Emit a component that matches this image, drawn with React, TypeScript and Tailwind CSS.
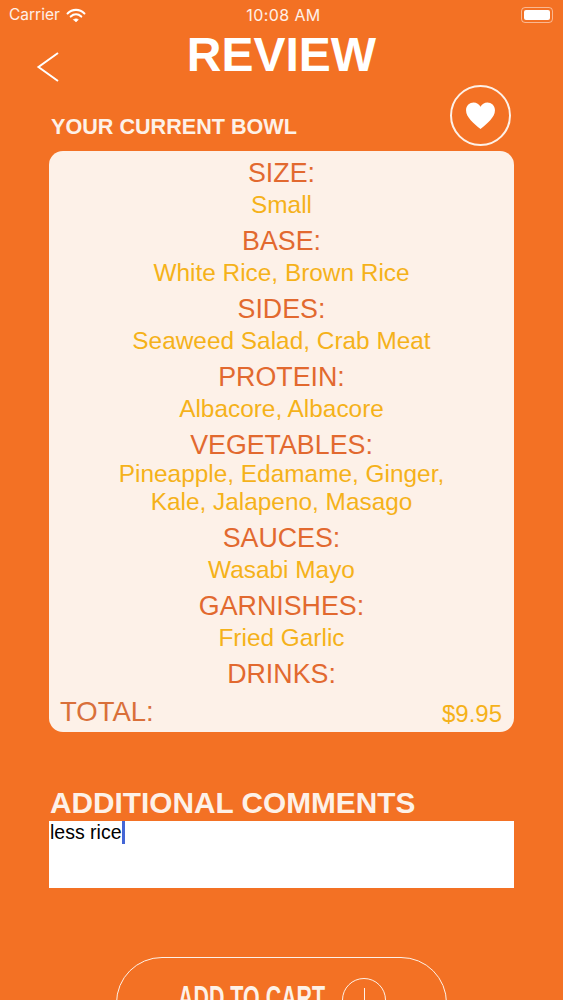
const sections = [
  { title: "SIZE:", lines: ["Small"] },
  { title: "BASE:", lines: ["White Rice, Brown Rice"] },
  { title: "SIDES:", lines: ["Seaweed Salad, Crab Meat"] },
  { title: "PROTEIN:", lines: ["Albacore, Albacore"] },
  { title: "VEGETABLES:", lines: ["Pineapple, Edamame, Ginger,", "Kale, Jalapeno, Masago"] },
  { title: "SAUCES:", lines: ["Wasabi Mayo"] },
  { title: "GARNISHES:", lines: ["Fried Garlic"] },
  { title: "DRINKS:", lines: [] },
];

function StatusBar() {
  return (
    <div className="h-[30px] flex items-center justify-between pl-[9px] pr-[10px] text-white/90 text-[15.5px] font-['Inter',sans-serif]">
      <div className="w-[120px] flex items-center gap-[6px]">
        <span>Carrier</span>
        <svg width="20" height="15" viewBox="0 0 19 14" fill="none" stroke="white" strokeLinecap="round">
          <path d="M1.5 5 C6 0.5 13 0.5 17.5 5" strokeWidth="2" />
          <path d="M4.5 8 C7.5 5.2 11.5 5.2 14.5 8" strokeWidth="2" />
          <path d="M7.2 11 L9.5 13.2 L11.8 11 C10.4 9.8 8.6 9.8 7.2 11Z" fill="white" strokeWidth="0.5" />
        </svg>
      </div>
      <span className="ml-[5px] text-[16px] tracking-[0.4px]">10:08 AM</span>
      <div className="w-[120px] flex justify-end">
        <div className="w-[32px] h-[16px] rounded-[4px] border border-white/50 p-[2px]">
          <div className="w-full h-full rounded-[2px] bg-white" />
        </div>
      </div>
    </div>
  );
}

export default function App() {
  return (
    <div className="h-[1000px] overflow-hidden bg-[#f37124] font-['Liberation_Sans',sans-serif]">
      <StatusBar />

      {/* Title */}
      <div className="relative h-[50px] flex items-center justify-center">
        <svg
          className="absolute left-[36px] top-[22px]"
          width="24"
          height="30"
          viewBox="0 0 24 30"
          fill="none"
          stroke="white"
          strokeWidth="2"
        >
          <path d="M22 1 L2.5 15 L22 29" />
        </svg>
        <h1 className="text-[48px] leading-[50px] font-bold text-white">REVIEW</h1>
      </div>

      {/* Bowl heading + favourite */}
      <div className="h-[71px] pl-[51px] pr-[52px] flex items-start justify-between">
        <div className="mt-[34px] text-[21.6px] leading-[26px] font-bold text-[#fdf1e8]">YOUR CURRENT BOWL</div>
        <div className="mt-[5px] w-[61px] h-[61px] rounded-full border-2 border-[#fdf1e8] flex items-center justify-center">
          <svg width="31" height="27" viewBox="0 0 32 28" fill="white">
            <path d="M16 28 C9 22 1 16 1 8.5 C1 3.5 4.8 0.5 8.8 0.5 C12 0.5 14.6 2.2 16 5 C17.4 2.2 20 0.5 23.2 0.5 C27.2 0.5 31 3.5 31 8.5 C31 16 23 22 16 28Z" />
          </svg>
        </div>
      </div>

      {/* Card */}
      <div className="mx-[49px] h-[581px] rounded-[14px] bg-[#fdf1e8] pt-[6px] flex flex-col">
        <div className="flex flex-col items-center gap-[4px]">
          {sections.map((s) => (
            <div key={s.title} className="flex flex-col items-center">
              <div className="h-[32px] text-[26.8px] leading-[32px] text-[#e2692f]">{s.title}</div>
              {s.lines.length > 1 ? (
                <div className="-mt-[1px] mb-[2px] text-[24.4px] leading-[28px] text-center text-[#f5b21a]">
                  {s.lines.map((l) => (
                    <div key={l}>{l}</div>
                  ))}
                </div>
              ) : (
                s.lines.map((l) => (
                  <div key={l} className="h-[32px] text-[24.4px] leading-[32px] text-[#f5b21a]">
                    {l}
                  </div>
                ))
              )}
            </div>
          ))}
        </div>
        <div className="mt-auto mb-[2px] pl-[11px] pr-[12px] flex items-center justify-between">
          <span className="text-[27.5px] leading-[32px] text-[#d9703a]">TOTAL:</span>
          <span className="text-[24px] leading-[32px] mt-[4px] text-[#f5b21a]">$9.95</span>
        </div>
      </div>

      {/* Comments */}
      <div className="mt-[53px] mx-[49px]">
        <div className="pl-[1px] text-[29.8px] leading-[36px] font-bold text-[#fdf1e8] whitespace-nowrap">ADDITIONAL COMMENTS</div>
        <div className="h-[67px] bg-white flex items-start pl-[1px]">
          <span className="text-[19.5px] leading-[22px] text-black">less rice</span>
          <span className="w-[3px] h-[23px] bg-[#4466d6]" />
        </div>
      </div>

      {/* Add to cart */}
      <div className="mt-[69px] mx-[116px] h-[100px] rounded-[46px] border-[1.5px] border-[#fdf1e8] pt-[19px] pl-[61px] flex items-start gap-[16px]">
        <span className="text-[34px] leading-[40px] font-bold text-[#fdf1e8] whitespace-nowrap w-[148px] scale-x-[0.63] origin-left">ADD TO CART</span>
        <div className="mt-px w-[44px] h-[44px] rounded-full border border-[#fdf1e8] flex items-center justify-center">
          <div className="w-px h-[24px] bg-[#fdf1e8]" />
        </div>
      </div>
    </div>
  );
}
